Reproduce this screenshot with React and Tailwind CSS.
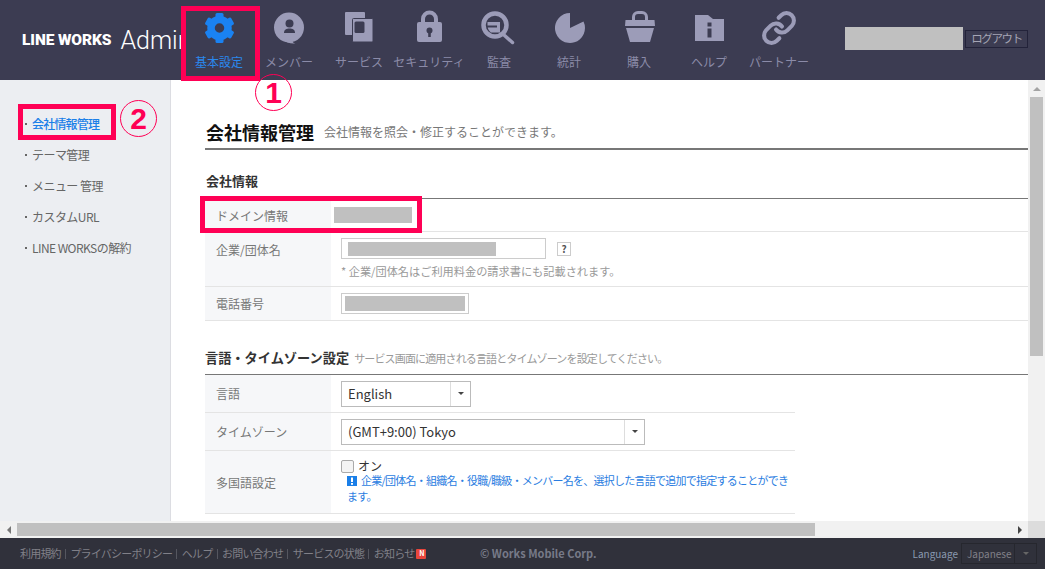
import { Link as LinkIcon } from 'lucide-react';

const GearIcon = () => (
  <svg width="40" height="40" viewBox="0 0 40 40" fill="#1a82f2">
    {[0, 60, 120, 180, 240, 300].map((a) => (
      <rect key={a} x="16.5" y="5" width="8" height="8" rx="1.5" transform={`rotate(${a} 20.5 20)`} />
    ))}
    <circle cx="20.5" cy="20" r="8.5" fill="none" stroke="#1a82f2" strokeWidth="7.5" />
  </svg>
);

const MemberIcon = () => (
  <svg width="40" height="40" viewBox="0 0 40 40" fill="#9c9cb8">
    <circle cx="20" cy="19.5" r="15" />
    <path d="M13 31 C17 35 22 36 26.5 35.5 C24 35 23 33.5 24 32 Z" />
    <circle cx="20.5" cy="15.5" r="4" fill="#3c3c52" />
    <path d="M15 25 C15 21.5 17.5 20.5 20.5 20.5 C23.5 20.5 26 21.5 26 25 Z" fill="#3c3c52" />
  </svg>
);

const ServiceIcon = () => (
  <svg width="40" height="40" viewBox="0 0 40 40" fill="#9c9cb8">
    <rect x="6" y="4" width="20" height="23" rx="1" />
    <rect x="13.5" y="10.5" width="20.5" height="23.5" rx="1" stroke="#3c3c52" strokeWidth="1" />
    <rect x="15.5" y="13.5" width="10" height="11.5" rx="1.5" fill="#3c3c52" />
  </svg>
);

const LockIcon = () => (
  <svg width="40" height="40" viewBox="0 0 40 40" fill="#9c9cb8">
    <path d="M14 15 V11 a6.5 6.5 0 0 1 13 0 V15" fill="none" stroke="#9c9cb8" strokeWidth="4" />
    <rect x="8" y="14" width="25" height="20" rx="2" />
    <circle cx="20.5" cy="22.5" r="3" fill="#3c3c52" />
    <rect x="19.2" y="23" width="2.6" height="6" fill="#3c3c52" />
  </svg>
);

const AuditIcon = () => (
  <svg width="40" height="40" viewBox="0 0 40 40" fill="#9c9cb8">
    <circle cx="16" cy="17" r="11.5" fill="none" stroke="#9c9cb8" strokeWidth="4.5" />
    <path d="M25 27 L33.5 34.5" stroke="#9c9cb8" strokeWidth="3.5" strokeLinecap="round" />
    <path d="M8.5 14 H21 V24.5 H12 C10 23 9 21 8.8 19.5 H18 V17.5 H8.5 Z" />
  </svg>
);

const StatsIcon = () => (
  <svg width="40" height="40" viewBox="0 0 40 40" fill="#9c9cb8">
    <path d="M21 20 L21 5 A15 15 0 1 0 34.5 13.5 Z" />
  </svg>
);

const BasketIcon = () => (
  <svg width="40" height="40" viewBox="0 0 40 40" fill="#9c9cb8">
    <path d="M14.5 12 V9 a4.5 4.5 0 0 1 4.5-4.5 h4 a4.5 4.5 0 0 1 4.5 4.5 V12" fill="none" stroke="#9c9cb8" strokeWidth="3" />
    <path d="M6.5 12 H35.5 L36 18 H6 Z" />
    <path d="M7 20 H35 L31 34 H11 Z" />
  </svg>
);

const InfoIcon = () => (
  <svg width="40" height="40" viewBox="0 0 40 40" fill="#9c9cb8">
    <path d="M6 7 H19 L24 11 H35 V33 H6 Z" />
    <rect x="18.5" y="14.5" width="4" height="4" fill="#3c3c52" />
    <rect x="18.5" y="20.5" width="4" height="9" fill="#3c3c52" />
  </svg>
);

const navItems = [
  { label: '基本設定', icon: <GearIcon />, active: true },
  { label: 'メンバー', icon: <MemberIcon /> },
  { label: 'サービス', icon: <ServiceIcon /> },
  { label: 'セキュリティ', icon: <LockIcon /> },
  { label: '監査', icon: <AuditIcon /> },
  { label: '統計', icon: <StatsIcon /> },
  { label: '購入', icon: <BasketIcon /> },
  { label: 'ヘルプ', icon: <InfoIcon /> },
  {
    label: 'パートナー',
    icon: (
      <span className="flex h-[40px] w-[40px] items-center justify-center">
        <LinkIcon size={36} strokeWidth={2.7} color="#9c9cb8" />
      </span>
    ),
  },
];

const sideItems = ['会社情報管理', 'テーマ管理', 'メニュー 管理', 'カスタムURL', 'LINE WORKSの解約'];

const footerLinks = ['利用規約', 'プライバシーポリシー', 'ヘルプ', 'お問い合わせ', 'サービスの状態', 'お知らせ'];

const Redacted = ({ className }) => <div className={`bg-[#c0c0c0] ${className}`} />;

const Row = ({ label, height, alignTop, children }) => (
  <div className={`flex border-b border-[#e4e4e4] ${height}`}>
    <div className={`flex w-[126px] shrink-0 bg-[#f6f7f9] pl-[11px] text-[12px] text-[#777] ${alignTop ? 'items-start pt-[9px]' : 'items-center pt-[1px]'}`}>
      {label}
    </div>
    <div className="min-w-0 flex-1 pl-[10px]">{children}</div>
  </div>
);

const SelectBox = ({ value, width }) => (
  <div className={`flex h-[26px] items-center border border-[#bbb] bg-white ${width}`}>
    <span className="flex-1 pl-[6px] text-[13px] text-[#333]">{value}</span>
    <span className="flex h-full w-[20px] items-center justify-center border-l border-[#ddd]">
      <span className="h-0 w-0 border-x-[3px] border-t-[3px] border-x-transparent border-t-[#444]" />
    </span>
  </div>
);

export default function App() {
  return (
    <div className="relative flex h-[569px] w-[1045px] flex-col overflow-hidden bg-white font-['Noto_Sans_CJK_JP','Noto_Sans',sans-serif]">
      {/* Header */}
      <header className="flex h-[80px] shrink-0 bg-[#3c3c52]">
        <div className="flex w-[184px] shrink-0 items-center overflow-hidden pl-[22px] pt-[1px] whitespace-nowrap">
          <span className="font-['Roboto',sans-serif] text-[15.5px] font-black tracking-[-0.1px] text-white">LINE WORKS</span>
          <span className="ml-[9px] font-['Roboto',sans-serif] text-[25px] font-light text-white">Admin</span>
        </div>
        <nav className="flex">
          {navItems.map((item) => (
            <div key={item.label} className="flex w-[70px] flex-col items-center pt-[8px]">
              {item.icon}
              <span className={`mt-[5px] whitespace-nowrap text-[12px] leading-[18px] ${item.active ? 'text-[#2a88ee]' : 'text-[#8b8ba8]'}`}>
                {item.label}
              </span>
            </div>
          ))}
        </nav>
        <div className="ml-[31px] flex h-fit items-center pt-[27px]">
          <Redacted className="h-[23px] w-[118px]" />
          <div className="ml-[2px] flex h-[18px] w-[63px] items-center justify-center border border-[#23233a] text-[11.5px] tracking-[-1.4px] text-[#a5a5b5]">
            ログアウト
          </div>
        </div>
      </header>

      {/* Body */}
      <div className="flex h-[441px] shrink-0">
        <aside className="w-[171px] shrink-0 border-r border-[#dcdde2] bg-[#eceef2] pt-[28px]">
          {sideItems.map((s, i) => (
            <div key={s} className={`flex h-[31px] items-center pl-[25px] text-[12px] ${i === 0 ? 'font-medium tracking-[-0.8px] text-[#1a7fe8]' : 'tracking-[-0.55px] text-[#666]'}`}>
              <span className="mr-[5px] h-[2px] w-[2px] bg-[#666]" />
              {s}
            </div>
          ))}
        </aside>

        <main className="min-w-0 flex-1 overflow-hidden pl-[34px]">
          <div className="flex h-[70px] items-end border-b-2 border-[#777] pb-[3px] pl-[1px]">
            <h1 className="text-[18px] font-bold leading-[26px] text-[#111]">会社情報管理</h1>
            <p className="ml-[10px] pb-[4px] text-[12px] leading-[18px] text-[#777]">会社情報を照会・修正することができます。</p>
          </div>
          <div className="flex h-[49px] items-end border-b border-[#777] pb-[7px] pl-[1px]">
            <h2 className="text-[13px] font-bold leading-[20px] text-[#333]">会社情報</h2>
          </div>

          <Row label="ドメイン情報" height="h-[33px]">
            <div className="flex h-full items-center">
              <Redacted className="-ml-[7px] h-[16px] w-[78px]" />
            </div>
          </Row>
          <Row label="企業/団体名" height="h-[55px]" alignTop>
            <div className="flex items-center pt-[6px]">
              <div className="flex h-[21px] w-[205px] items-center border border-[#ccc] pl-[6px]">
                <Redacted className="h-[14px] w-[148px]" />
              </div>
              <div className="ml-[11px] flex h-[14px] w-[14px] items-center justify-center border border-[#ccc] text-[10px] font-bold leading-none text-[#555]">?</div>
            </div>
            <p className="mt-[3px] text-[11.2px] leading-[18px] text-[#999]">* 企業/団体名はご利用料金の請求書にも記載されます。</p>
          </Row>
          <Row label="電話番号" height="h-[34px]">
            <div className="flex h-full items-center">
              <div className="flex h-[21px] w-[128px] items-center border border-[#ccc] px-[3px]">
                <Redacted className="h-[15px] w-[121px]" />
              </div>
            </div>
          </Row>

          <div className="flex h-[54px] items-end border-b border-[#777] pb-[6px]">
            <h2 className="text-[13.2px] font-bold leading-[20px] text-[#333]">言語・タイムゾーン設定</h2>
            <p className="ml-[5px] text-[11px] leading-[20px] tracking-[-0.85px] text-[#999]">サービス画面に適用される言語とタイムゾーンを設定してください。</p>
          </div>
          <div className="w-[590px]">
            <Row label="言語" height="h-[38px]">
              <div className="flex h-full items-center">
                <SelectBox value="English" width="w-[130px]" />
              </div>
            </Row>
            <Row label="タイムゾーン" height="h-[38px]">
              <div className="flex h-full items-center">
                <SelectBox value="(GMT+9:00) Tokyo" width="w-[304px]" />
              </div>
            </Row>
            <Row label="多国語設定" height="h-[63px]">
              <div className="pt-[7px]">
                <div className="flex h-[16px] items-center">
                  <span className="h-[13px] w-[13px] rounded-[2px] border border-[#aaa] bg-[#f4f4f4]" />
                  <span className="ml-[4px] text-[12px] text-[#333]">オン</span>
                </div>
                <p className="-mt-[2px] pl-[6px] text-[11px] leading-[16px] tracking-[-0.75px] text-[#2a7de1]">
                  <svg className="mr-[4px] inline align-[-1px]" width="10" height="10" viewBox="0 0 10 10">
                    <rect width="10" height="10" fill="#1a7fe8" />
                    <rect x="4" y="1.5" width="2" height="4.5" fill="#fff" />
                    <rect x="4" y="7" width="2" height="1.8" fill="#fff" />
                  </svg>
                  企業/団体名・組織名・役職/職級・メンバー名を、選択した言語で追加で指定することができます。
                </p>
              </div>
            </Row>
          </div>
        </main>

        {/* Vertical scrollbar */}
        <div className="flex w-[17px] shrink-0 flex-col items-center bg-[#f1f1f1]">
          <div className="flex h-[17px] items-center justify-center">
            <span className="h-0 w-0 border-x-[4px] border-b-[4px] border-x-transparent border-b-[#a3a3a3]" />
          </div>
          <div className="h-[259px] w-[13px] bg-[#c0c0c0]" />
        </div>
      </div>

      {/* Horizontal scrollbar */}
      <div className="flex h-[17px] shrink-0 items-center bg-[#f1f1f1]">
        <div className="flex w-[17px] justify-center">
          <span className="h-0 w-0 border-y-[4px] border-r-[4px] border-y-transparent border-r-[#777]" />
        </div>
        <div className="h-[13px] w-[798px] bg-[#c0c0c0]" />
        <div className="flex-1" />
        <div className="flex w-[17px] justify-center">
          <span className="h-0 w-0 border-y-[4px] border-l-[4px] border-y-transparent border-l-[#444]" />
        </div>
        <div className="h-full w-[17px] bg-[#dcdcdc]" />
      </div>

      {/* Footer */}
      <footer className="flex h-[31px] shrink-0 items-center bg-[#30313b] pl-[20px] pr-[8px] text-[11px] text-[#808088]">
        <div className="flex w-[460px] shrink-0 items-center whitespace-nowrap tracking-[-0.8px]">
          {footerLinks.map((l, i) => (
            <span key={l} className="flex items-center">
              {i > 0 && <span className="mx-[4.3px] h-[10px] w-px bg-[#55565f]" />}
              {l}
            </span>
          ))}
          <span className="ml-[2px] flex h-[10px] w-[10px] items-center justify-center rounded-[1px] bg-[#e8463c] text-[7px] font-bold leading-none text-white">N</span>
        </div>
        <span className="text-[11px] font-bold text-[#777a88]">© Works Mobile Corp.</span>
        <div className="ml-auto flex items-center">
          <span className="text-[10px] text-[#8a9ab0]">Language</span>
          <div className="ml-[3px] flex h-[21px] w-[76px] items-center border border-[#26272e]">
            <span className="flex-1 pl-[5px] text-[10px] text-[#808088]">Japanese</span>
            <span className="flex h-full w-[22px] items-center justify-center border-l border-[#26272e]">
              <span className="h-0 w-0 border-x-[3px] border-t-[3px] border-x-transparent border-t-[#666]" />
            </span>
          </div>
        </div>
      </footer>

      {/* Red annotations over the screenshot */}
      <div className="absolute left-[181px] top-[6px] h-[75px] w-[79px] border-[5px] border-[#ff0055]" />
      <div className="absolute left-[18px] top-[104px] h-[36px] w-[98px] border-[5px] border-[#ff0055]" />
      <div className="absolute left-[200px] top-[196px] h-[37px] w-[222px] border-[5px] border-[#ff0055]" />
      <div className="absolute left-[255px] top-[74px] flex h-[37px] w-[37px] items-center justify-center rounded-full border border-[#ff0055] font-['Liberation_Sans',sans-serif] text-[30px] font-bold leading-none text-[#ff0055]">1</div>
      <div className="absolute left-[120px] top-[100px] flex h-[37px] w-[37px] items-center justify-center rounded-full border border-[#ff0055] font-['Liberation_Sans',sans-serif] text-[30px] font-bold leading-none text-[#ff0055]">2</div>
    </div>
  );
}
